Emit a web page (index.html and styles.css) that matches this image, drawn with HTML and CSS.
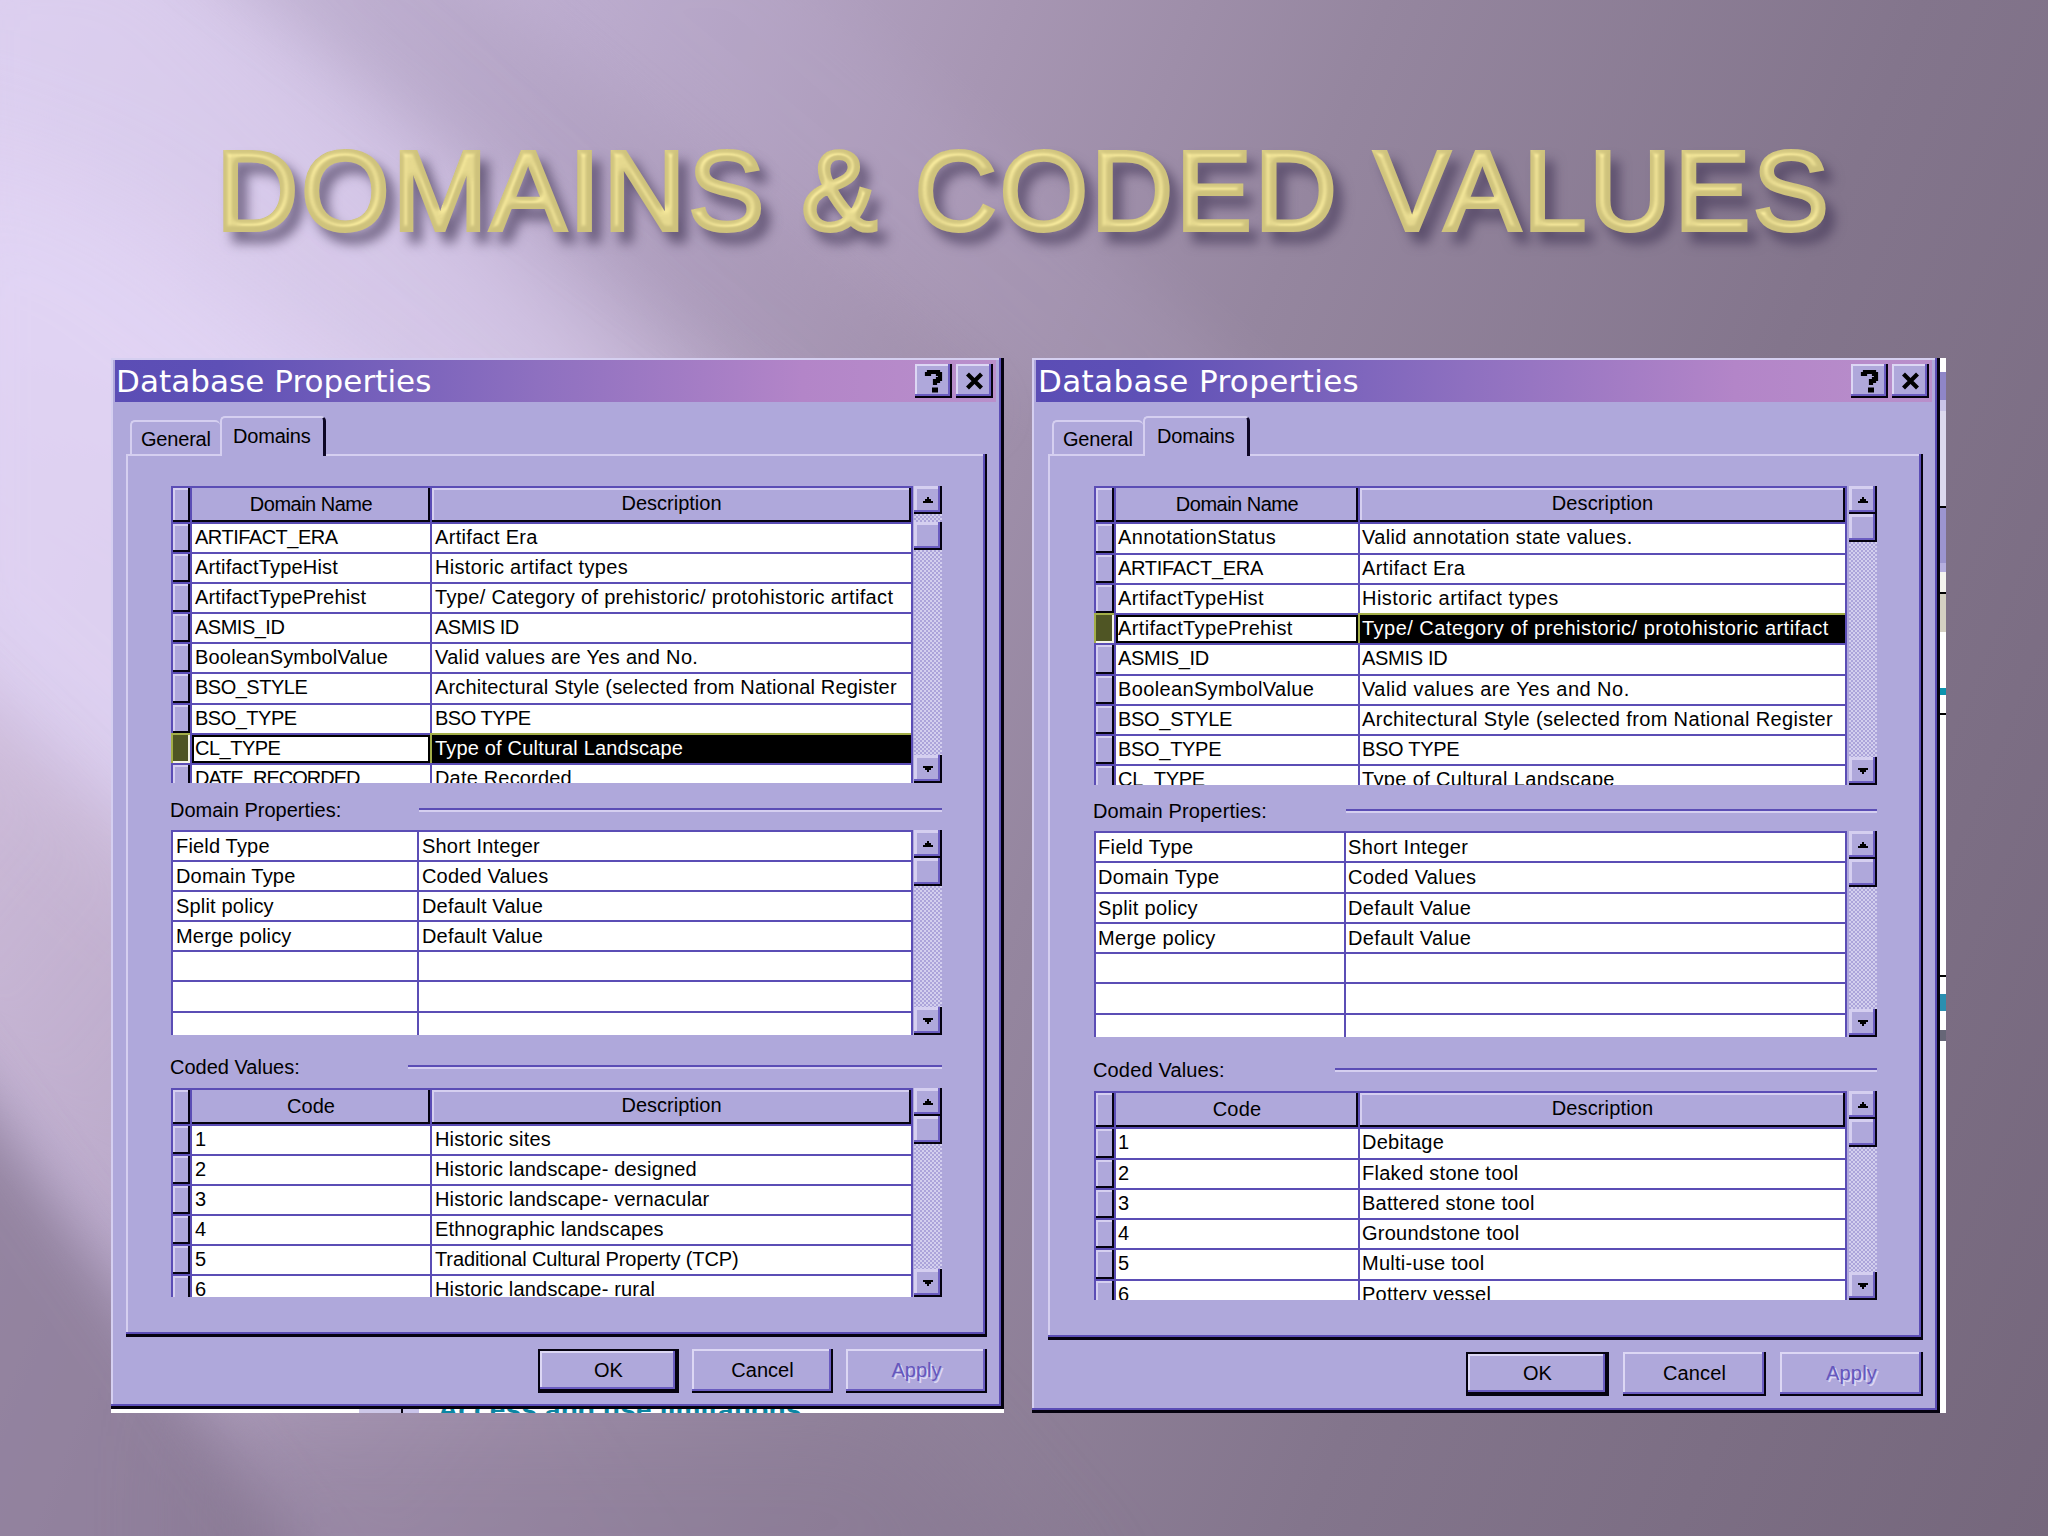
FILE: index.html
```html
<!DOCTYPE html>
<html lang="en">
<head>
    <meta charset="UTF-8">
    <meta name="viewport" content="width=device-width, initial-scale=1.0">
    <title>Domains &amp; Coded Values</title>
    <link rel="stylesheet" href="styles.css">
</head>
<body>
<!-- light beams behind the slide -->
<svg class="beams" width="2048" height="1536" viewBox="0 0 2048 1536">
    <defs>
        <linearGradient id="fade" x1="0" y1="0" x2="1" y2="1">
            <stop offset="0" stop-color="#d2bdd6"/>
            <stop offset="0.4" stop-color="#c3afc9" stop-opacity="0.55"/>
            <stop offset="0.8" stop-color="#b5a2be" stop-opacity="0.05"/>
        </linearGradient>
        <filter id="soft" x="-30%" y="-30%" width="160%" height="160%"><feGaussianBlur stdDeviation="28"/></filter>
        <filter id="softer" x="-30%" y="-30%" width="160%" height="160%"><feGaussianBlur stdDeviation="55"/></filter>
        <filter id="bevel" x="-5%" y="-20%" width="110%" height="140%" color-interpolation-filters="sRGB">
            <feGaussianBlur in="SourceAlpha" stdDeviation="3" result="b"/>
            <feSpecularLighting in="b" surfaceScale="5" specularConstant="0.6" specularExponent="10" lighting-color="#fff8c8" result="s">
                <feDistantLight azimuth="235" elevation="55"/>
            </feSpecularLighting>
            <feComposite in="s" in2="SourceAlpha" operator="in" result="s2"/>
            <feComposite in="SourceGraphic" in2="s2" operator="arithmetic" k1="0" k2="1" k3="0.25" k4="0"/>
        </filter>
        <symbol id="up" viewBox="0 0 10 6"><path d="M4 0h2v2h2v2h2v2H0V4h2V2h2z"/></symbol>
        <symbol id="down" viewBox="0 0 10 6"><path d="M0 0h10v2H8v2H6v2H4V4H2V2H0z"/></symbol>
        <symbol id="help" viewBox="0 0 20 24"><path d="M3 7V5h2V3h9v2h2v5h-2v2h-3v4" fill="none" stroke="#000" stroke-width="4.2"/><rect x="8" y="18.500" width="6" height="5"/></symbol>
        <symbol id="close" viewBox="0 0 20 20"><path d="M2.500 3l14 14M16.500 3l-14 14" stroke="#000" stroke-width="4.200"/></symbol>
    </defs>
    <polygon points="-100,-100 150,-100 860,560 860,900 -100,300" fill="#e0d3f3" opacity="0.65" filter="url(#softer)"/>
    <polygon points="-100,120 120,200 900,800 300,1000 -100,640" fill="#e2d5f5" opacity="0.85" filter="url(#softer)"/>
    <polygon points="-100,620 200,900 700,1600 420,1600 -100,960" fill="url(#fade)" opacity="0.55" filter="url(#soft)"/>
    <polygon points="-100,980 360,1640 -100,1640" fill="#82728c" opacity="0.7" filter="url(#soft)"/>
    <polygon points="200,1400 900,1400 1100,1640 200,1640" fill="#84758f" opacity="0.45" filter="url(#softer)"/>
    <polygon points="170,-60 420,-60 1000,420 820,420" fill="#9a8aa8" opacity="0.2" filter="url(#soft)"/>
    <polygon points="480,-60 760,-60 1300,420 1060,420" fill="#c0b0d4" opacity="0.15" filter="url(#soft)"/>
</svg>

<div class="slide">
    <h1>DOMAINS &amp; CODED VALUES</h1>

    <div class="shots">
        <div class="shot left">
            <div class="window">
                <div class="titleBar">
                    <span class="titleText">Database Properties</span>
                    <span class="tbtn"><svg width="20" height="24"><use href="#help"/></svg></span>
                    <span class="tbtn"><svg width="20" height="20"><use href="#close"/></svg></span>
                </div>
                <div class="tabs">
                    <div class="tab general">General</div>
                    <div class="tab domains">Domains</div>
                </div>
                <div class="panel">
                    <div class="gridBox domainList">
                        <div class="table three">
                            <div class="row head"><i></i><b class="tight">Domain Name</b><b class="lit">Description</b></div>
                            <div class="row"><i></i><span class="caps">ARTIFACT_ERA</span><span class="wide">Artifact Era</span></div>
                            <div class="row"><i></i><span>ArtifactTypeHist</span><span class="wide">Historic artifact types</span></div>
                            <div class="row"><i></i><span>ArtifactTypePrehist</span><span class="wide">Type/ Category of prehistoric/ protohistoric artifact</span></div>
                            <div class="row"><i></i><span class="caps">ASMIS_ID</span><span class="caps">ASMIS ID</span></div>
                            <div class="row"><i></i><span>BooleanSymbolValue</span><span class="wide">Valid values are Yes and No.</span></div>
                            <div class="row"><i></i><span class="caps">BSO_STYLE</span><span>Architectural Style (selected from National Register</span></div>
                            <div class="row"><i></i><span class="caps">BSO_TYPE</span><span class="caps">BSO TYPE</span></div>
                            <div class="row selected"><i></i><span class="caps">CL_TYPE</span><span>Type of Cultural Landscape</span></div>
                            <div class="row"><i></i><span class="caps more">DATE_RECORDED</span><span>Date Recorded</span></div>
                        </div>
                        <div class="scroll low">
                            <div class="sbtn"><svg width="10" height="6"><use href="#up"/></svg></div>
                            <div class="sbtn thumb"></div>
                            <div class="sbtn down"><svg width="10" height="6"><use href="#down"/></svg></div>
                        </div>
                    </div>
                    <div class="label props"><span>Domain Properties:</span><hr></div>
                    <div class="gridBox propList">
                        <div class="table two">
                            <div class="row"><span>Field Type</span><span>Short Integer</span></div>
                            <div class="row"><span>Domain Type</span><span>Coded Values</span></div>
                            <div class="row"><span>Split policy</span><span>Default Value</span></div>
                            <div class="row"><span>Merge policy</span><span>Default Value</span></div>
                            <div class="row"><span></span><span></span></div>
                            <div class="row"><span></span><span></span></div>
                            <div class="row"><span></span><span></span></div>
                        </div>
                        <div class="scroll">
                            <div class="sbtn"><svg width="10" height="6"><use href="#up"/></svg></div>
                            <div class="sbtn thumb"></div>
                            <div class="sbtn down"><svg width="10" height="6"><use href="#down"/></svg></div>
                        </div>
                    </div>
                    <div class="label codes"><span>Coded Values:</span><hr></div>
                    <div class="gridBox codeList">
                        <div class="table three">
                            <div class="row head"><i></i><b>Code</b><b class="lit">Description</b></div>
                            <div class="row"><i></i><span>1</span><span>Historic sites</span></div>
                            <div class="row"><i></i><span>2</span><span>Historic landscape- designed</span></div>
                            <div class="row"><i></i><span>3</span><span>Historic landscape- vernacular</span></div>
                            <div class="row"><i></i><span>4</span><span>Ethnographic landscapes</span></div>
                            <div class="row"><i></i><span>5</span><span class="narrow">Traditional Cultural Property (TCP)</span></div>
                            <div class="row"><i></i><span>6</span><span>Historic landscape- rural</span></div>
                        </div>
                        <div class="scroll">
                            <div class="sbtn"><svg width="10" height="6"><use href="#up"/></svg></div>
                            <div class="sbtn thumb"></div>
                            <div class="sbtn down"><svg width="10" height="6"><use href="#down"/></svg></div>
                        </div>
                    </div>
                </div>
                <div class="buttons">
                    <div class="btn ok">OK</div>
                    <div class="btn">Cancel</div>
                    <div class="btn off">Apply</div>
                </div>
            </div>
            <div class="strip"><div class="hatch"></div><p>Access and use limitations</p></div>
        </div>

        <div class="shot right">
            <div class="window">
                <div class="titleBar">
                    <span class="titleText">Database Properties</span>
                    <span class="tbtn"><svg width="20" height="24"><use href="#help"/></svg></span>
                    <span class="tbtn"><svg width="20" height="20"><use href="#close"/></svg></span>
                </div>
                <div class="tabs">
                    <div class="tab general">General</div>
                    <div class="tab domains">Domains</div>
                </div>
                <div class="panel">
                    <div class="gridBox domainList">
                        <div class="table three">
                            <div class="row head"><i></i><b class="tight">Domain Name</b><b class="lit">Description</b></div>
                            <div class="row"><i></i><span>AnnotationStatus</span><span>Valid annotation state values.</span></div>
                            <div class="row"><i></i><span class="caps">ARTIFACT_ERA</span><span>Artifact Era</span></div>
                            <div class="row"><i></i><span>ArtifactTypeHist</span><span class="wide">Historic artifact types</span></div>
                            <div class="row selected"><i></i><span>ArtifactTypePrehist</span><span class="wide">Type/ Category of prehistoric/ protohistoric artifact</span></div>
                            <div class="row"><i></i><span class="caps">ASMIS_ID</span><span class="caps">ASMIS ID</span></div>
                            <div class="row"><i></i><span>BooleanSymbolValue</span><span class="wide">Valid values are Yes and No.</span></div>
                            <div class="row"><i></i><span class="caps">BSO_STYLE</span><span>Architectural Style (selected from National Register</span></div>
                            <div class="row"><i></i><span class="caps">BSO_TYPE</span><span class="caps">BSO TYPE</span></div>
                            <div class="row"><i></i><span class="caps">CL_TYPE</span><span>Type of Cultural Landscape</span></div>
                        </div>
                        <div class="scroll">
                            <div class="sbtn"><svg width="10" height="6"><use href="#up"/></svg></div>
                            <div class="sbtn thumb"></div>
                            <div class="sbtn down"><svg width="10" height="6"><use href="#down"/></svg></div>
                        </div>
                    </div>
                    <div class="label props"><span>Domain Properties:</span><hr></div>
                    <div class="gridBox propList">
                        <div class="table two">
                            <div class="row"><span>Field Type</span><span>Short Integer</span></div>
                            <div class="row"><span>Domain Type</span><span>Coded Values</span></div>
                            <div class="row"><span>Split policy</span><span>Default Value</span></div>
                            <div class="row"><span>Merge policy</span><span>Default Value</span></div>
                            <div class="row"><span></span><span></span></div>
                            <div class="row"><span></span><span></span></div>
                            <div class="row"><span></span><span></span></div>
                        </div>
                        <div class="scroll">
                            <div class="sbtn"><svg width="10" height="6"><use href="#up"/></svg></div>
                            <div class="sbtn thumb"></div>
                            <div class="sbtn down"><svg width="10" height="6"><use href="#down"/></svg></div>
                        </div>
                    </div>
                    <div class="label codes"><span>Coded Values:</span><hr></div>
                    <div class="gridBox codeList">
                        <div class="table three">
                            <div class="row head"><i></i><b>Code</b><b class="lit">Description</b></div>
                            <div class="row"><i></i><span>1</span><span>Debitage</span></div>
                            <div class="row"><i></i><span>2</span><span>Flaked stone tool</span></div>
                            <div class="row"><i></i><span>3</span><span>Battered stone tool</span></div>
                            <div class="row"><i></i><span>4</span><span>Groundstone tool</span></div>
                            <div class="row"><i></i><span>5</span><span>Multi-use tool</span></div>
                            <div class="row"><i></i><span>6</span><span>Pottery vessel</span></div>
                        </div>
                        <div class="scroll">
                            <div class="sbtn"><svg width="10" height="6"><use href="#up"/></svg></div>
                            <div class="sbtn thumb"></div>
                            <div class="sbtn down"><svg width="10" height="6"><use href="#down"/></svg></div>
                        </div>
                    </div>
                </div>
                <div class="buttons">
                    <div class="btn ok">OK</div>
                    <div class="btn">Cancel</div>
                    <div class="btn off">Apply</div>
                </div>
            </div>
        </div>
    </div>
</div>
</body>
</html>
```
FILE: styles.css
```css
*{
    margin: 0;
    padding: 0;
    box-sizing: border-box;
}
body{
    width: 2048px;
    height: 1536px;
    overflow: hidden;
    background: linear-gradient(112deg, #d6c9ea 0%, #bbabcd 22%, #a796b3 38%, #95869f 52%, #83758c 72%, #75677c 100%);
    font-family: "Liberation Sans", Arial, sans-serif;
    font-size: 20px;
    color: #000;
}
.beams{
    position: absolute;
    top: 0;
    left: 0;
}
.slide{
    position: relative;
    height: 1536px;
    overflow: hidden;
}
h1{
    height: 358px;
    padding: 126px 0 0 216px;
    font-size: 114px;
    font-weight: normal;
    line-height: 130px;
    letter-spacing: 2.7px;
    white-space: nowrap;
    color: #cec27c;
    -webkit-text-stroke: 4px #cec27c;
    filter: url(#bevel) drop-shadow(9px 11px 6px rgba(65, 52, 85, 0.65));
}
.shots{
    display: flex;
    align-items: flex-start;
    gap: 28px;
    padding-left: 111px;
}
.shot{
    background: #fff;
    height: 1055px;
}
.window{
    display: flex;
    flex-direction: column;
    background: #afa8db;
    padding: 2px 8px 0 4px;
    box-shadow: inset -3px -3px #05020f, inset -5px -5px #5b4db5, inset 2px 2px #d5cff0;
}
.left .window{
    width: 893px;
    height: 1051px;
}
.right{
    width: 914px;
    padding-right: 6px;
    background: linear-gradient(#fff 0 14px, #8f86c8 14px 42px, #c9c4e8 42px 53px, #dcd9ee 53px 148px, #000 148px 150px, #9c95d0 150px 205px, #b5aedf 205px 214px, #f4f3ee 214px 234px, #000 234px 236px, #d4d0c2 236px 274px, #fff 274px 330px, #0b93ad 330px 337px, #fff 337px 355px, #000 355px 357px, #fff 357px 617px, #000 617px 619px, #fff 619px 636px, #2a8fb0 636px 653px, #fff 653px 672px, #667 672px 683px, #fff 683px);
}
.right .window{
    width: 908px;
    height: 1055px;
    letter-spacing: 0.15px;
}

/* title bar */
.titleBar{
    display: flex;
    height: 42px;
    padding: 4px 3px 0 1px;
    background: linear-gradient(to right, #5b4db5 0%, #5e50b6 12%, #8e70c0 48%, #b385c8 78%, #b98fcb 100%);
}
.titleText{
    flex: 1;
    font-family: "DejaVu Sans", Verdana, sans-serif;
    font-size: 31px;
    line-height: 34px;
    letter-spacing: 0.05px;
    color: #fff;
}
.tbtn{
    display: flex;
    align-items: center;
    justify-content: center;
    width: 37px;
    height: 34px;
    margin-left: 4px;
    background: #afa8db;
    box-shadow: inset -2px -2px #05020f, inset -4px -4px #6a5cc0, inset 2px 2px #dcd7f4;
}

/* tabs */
.tabs{
    position: relative;
    z-index: 1;
    display: flex;
    align-items: flex-end;
    height: 54px;
    padding-left: 15px;
    margin-bottom: -2px;
}
.tab{
    border: 2px solid #d5cff0;
    border-bottom: none;
    border-radius: 5px 5px 0 0;
}
.general{
    width: 90px;
    height: 35px;
    padding-left: 9px;
    margin-bottom: 1px;
    border-right: none;
    line-height: 34px;
    letter-spacing: -0.2px;
}
.domains{
    width: 106px;
    height: 40px;
    padding-left: 11px;
    background: #afa8db;
    border-right: 3px solid #0d0624;
    line-height: 36px;
    letter-spacing: -0.2px;
}

/* tab panel */
.panel{
    width: 861px;
    height: 883px;
    margin-left: 11px;
    padding: 32px 45px 0 45px;
    box-shadow: inset -2px -3px #05020f, inset -4px -5px #5b4db5, inset 2px 2px #d5cff0;
}
.gridBox{
    display: flex;
    justify-content: space-between;
}
.table{
    width: 742px;
    overflow: hidden;
    background: #fff;
    border-right: 2px solid #5b4db5;
}
.row{
    display: grid;
    height: 30.1px;
}
.three .row{
    grid-template-columns: 19px 240px 1fr;
}
.two .row{
    grid-template-columns: 246px 1fr;
}
.row.head{
    height: 36px;
}
.row span, .row b, .row i{
    border-top: 2px solid #5b4db5;
    border-left: 2px solid #5b4db5;
    white-space: nowrap;
    overflow: hidden;
}
.row span{
    padding-left: 3px;
    line-height: 27px;
    letter-spacing: 0.18px;
}
.propList .row span{
    line-height: 28px;
}
.row b{
    background: #afa8db;
    font-weight: normal;
    line-height: 33px;
    text-align: center;
    box-shadow: inset -2px -2px #05020f;
}
.row b.lit{
    line-height: 31px;
    box-shadow: inset -2px -2px #05020f, inset 2px 2px #d5cff0;
}
.row i{
    background: #afa8db;
    box-shadow: inset -2px -2px #05020f, inset 2px 2px #d5cff0;
}
.row .tight{
    letter-spacing: -0.5px;
}
.row .caps{
    letter-spacing: -0.5px;
}
.row .more{
    letter-spacing: -1px;
}
.row .wide{
    letter-spacing: 0.32px;
}
.row .narrow{
    letter-spacing: -0.1px;
}
.selected i{
    background: #4f5524;
    border-color: #a3ae48;
    box-shadow: inset -2px -2px #f4f4e6;
}
.selected span:nth-child(2){
    box-shadow: inset 0 0 0 2px #000;
}
.selected span:nth-child(3){
    background: #000;
    border-color: #a3ae48;
    color: #fff;
}

/* scrollbars */
.scroll{
    display: flex;
    flex-direction: column;
    width: 28px;
    background: repeating-conic-gradient(#d3cfee 0 25%, #aca4da 0 50%) 0 0 / 4px 4px;
}
.sbtn{
    display: flex;
    align-items: center;
    justify-content: center;
    height: 28px;
    background: #afa8db;
    box-shadow: inset -2px -2px #05020f, inset -4px -4px #6a5cc0, inset 3px 3px #d5cff0;
}
.low .thumb{
    margin-top: 8px;
}
.down{
    margin-top: auto;
}

/* section labels */
.label{
    display: flex;
    justify-content: space-between;
    margin-left: -1px;
    line-height: 24px;
}
.label hr{
    height: 4px;
    margin-top: 10px;
    border: none;
    border-top: 2px solid #5b4db5;
    border-bottom: 2px solid #d5cff0;
}
.props{
    height: 47px;
    padding-top: 15px;
}
.props hr{
    width: 523px;
}
.codes{
    height: 53px;
    padding-top: 20px;
}
.codes hr{
    width: 534px;
}
.domainList{
    height: 297px;
}
.propList{
    height: 205px;
}
.codeList{
    height: 209px;
}

/* bottom buttons */
.buttons{
    display: flex;
    justify-content: flex-end;
    gap: 13px;
    margin: 12px 9px 0 0;
}
.btn{
    width: 141px;
    height: 44px;
    line-height: 43px;
    text-align: center;
    box-shadow: inset -2px -2px #05020f, inset -4px -4px #6a5cc0, inset 2px 2px #dcd7f4;
}
.ok{
    border: 2px solid #05020f;
    line-height: 39px;
}
.off{
    color: #6557bd;
    text-shadow: 2px 2px #dcd7f4;
}

/* what shows under the left window */
.strip{
    display: flex;
    height: 4px;
    padding-left: 248px;
    overflow: hidden;
}
.hatch{
    width: 60px;
    height: 4px;
    background: linear-gradient(to right, #cdc8e8 0 42px, #05020f 42px 44px, #c9c4ea 44px);
}
.strip p{
    margin: -13px 0 0 19px;
    font-size: 28px;
    font-weight: bold;
    line-height: 28px;
    letter-spacing: 0.15px;
    white-space: nowrap;
    color: #0b87a3;
}

/* right window is a bit larger */
.right .general{
    width: 91px;
}
.right .tabs{
    padding-left: 16px;
}
.right .domains{
    width: 107px;
    padding-left: 12px;
}
.right .panel{
    width: 875px;
    height: 886px;
    margin-left: 12px;
    padding-left: 46px;
    padding-right: 46px;
}
.right .table{
    width: 753px;
}
.right .row{
    height: 30.25px;
}
.right .row.head{
    height: 36.4px;
}
.right .row span{
    padding-left: 2px;
    letter-spacing: 0.36px;
}
.right .row .wide{
    letter-spacing: 0.48px;
}
.right .row .caps{
    letter-spacing: -0.3px;
}
.right .codeList .row span{
    letter-spacing: 0.25px;
}
.right .three .row{
    grid-template-columns: 20px 244px 1fr;
}
.right .two .row{
    grid-template-columns: 250px 1fr;
}
.right .domainList{
    height: 299px;
}
.right .propList{
    height: 206px;
}
.right .props{
    height: 46px;
    padding-top: 14px;
}
.right .props hr{
    width: 531px;
}
.right .codes{
    height: 54px;
    padding-top: 21px;
}
.right .codes hr{
    width: 542px;
}
.right .btn{
    width: 143px;
}
.right .buttons{
    gap: 14px;
}
.right .titleText{
    padding-left: 1px;
    letter-spacing: 0.35px;
}
```
